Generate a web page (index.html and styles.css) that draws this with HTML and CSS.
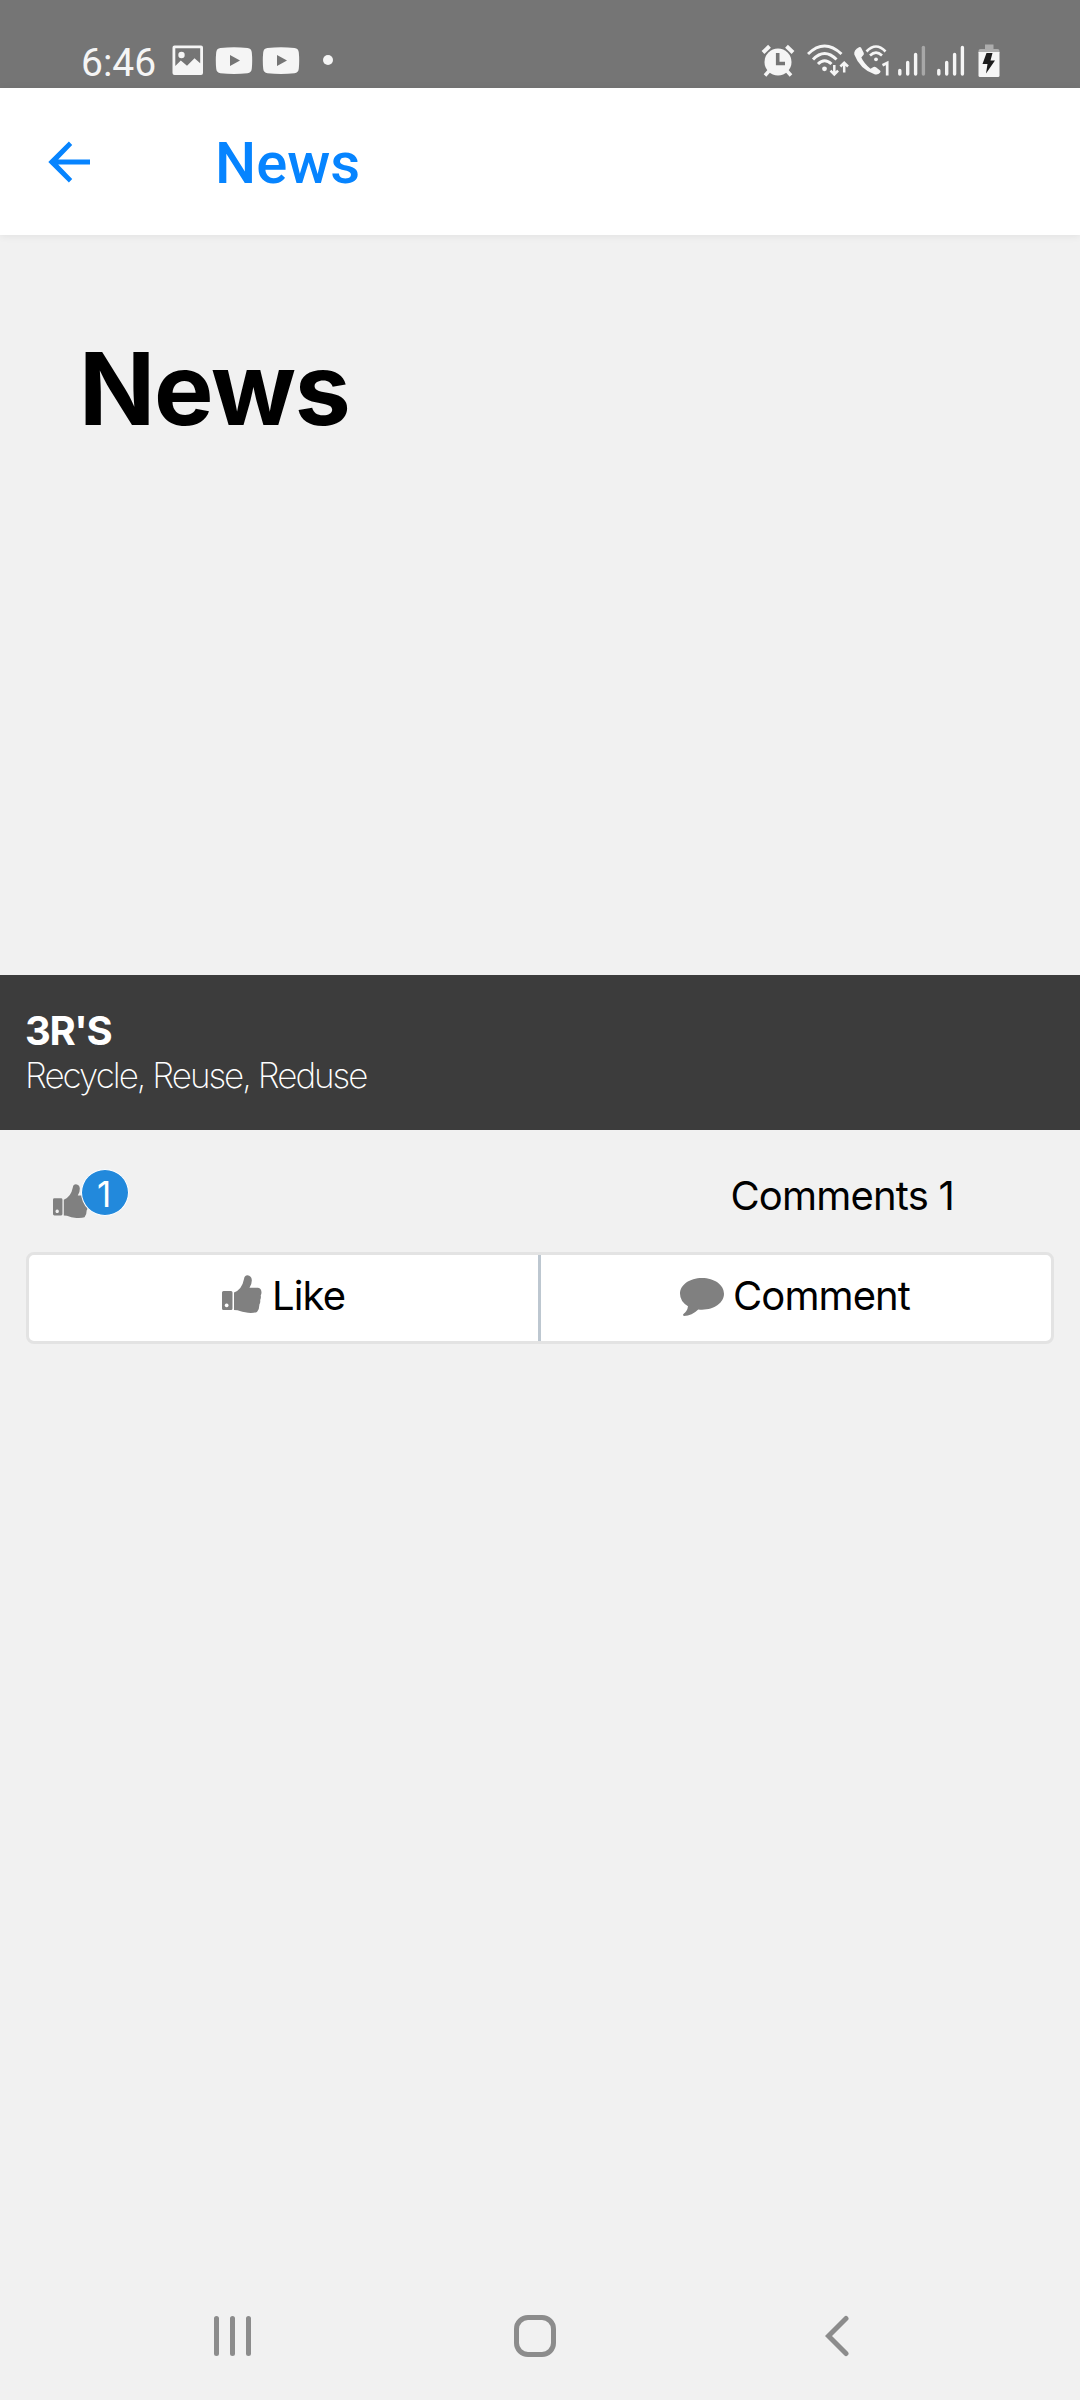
FILE: index.html
```html
<!DOCTYPE html>
<html lang="en">
<head>
<meta charset="utf-8">
<title>News</title>
<link rel="stylesheet" href="styles.css">
</head>
<body>
<div class="status">
  <div class="status-left">
    <span class="clock">6:46</span>
    <svg class="ic-image" width="32" height="32" viewBox="0 0 32 32"><path fill-rule="evenodd" d="M2.500 .5h26.500a2 2 0 0 1 2 2v25.500a2 2 0 0 1-2 2h-26.500a2 2 0 0 1-2-2v-25.500a2 2 0 0 1 2-2zM3.300 3.300v17.700l5.500-5.500 6.200 5.200 7.500-7.500 5.700 5v-14.900z"/><circle cx="9.500" cy="10" r="3.200"/></svg>
    <svg class="ic-video" width="38" height="28" viewBox="0 0 38 28"><path fill-rule="evenodd" d="M5.500 1Q19-.4 32.500 1Q36.500 1.400 36.800 5.500Q37.600 13.500 36.800 21.500Q36.500 25.800 32.500 26.200Q19 27.600 5.500 26.200Q1.500 25.800 1.200 21.500Q.4 13.500 1.200 5.500Q1.500 1.400 5.500 1zM15 8v11l10-5.500z"/></svg>
    <svg class="ic-video" width="38" height="28" viewBox="0 0 38 28"><path fill-rule="evenodd" d="M5.500 1Q19-.4 32.500 1Q36.500 1.400 36.800 5.500Q37.600 13.500 36.800 21.500Q36.500 25.800 32.500 26.200Q19 27.600 5.500 26.200Q1.500 25.800 1.200 21.500Q.4 13.500 1.200 5.500Q1.500 1.400 5.500 1zM15 8v11l10-5.500z"/></svg>
    <span class="more-dot"></span>
  </div>
  <div class="status-right">
    <svg class="ic-alarm" width="34" height="34" viewBox="0 0 34 34"><circle cx="17" cy="18" r="13.500"/><path class="line" stroke-width="4" d="M2 8.500L8.500 2.200M25.500 2.200L32 8.500"/><path class="line" stroke-width="3.500" d="M8 27L4 31.500M26 27L30 31.500"/><path class="cut" stroke-width="3.600" d="M16.700 9v10.500H24"/></svg>
    <svg class="ic-wifi" width="42" height="34" viewBox="0 0 42 34"><g class="line" stroke-width="3"><path d="M1 10Q17.500-6 34.500 10"/><path d="M6 15.500Q17.500 3.500 29.500 15.500"/><path d="M11 20Q17.500 13.500 24.500 20"/></g><circle cx="17.500" cy="24.800" r="2.400"/><path class="line" stroke-width="2.500" d="M27.300 21v9M23.500 26.700l3.800 3.800 3.800-3.800M37.200 28.500v-9M33.400 22.500l3.800-3.800 3.800 3.800"/></svg>
    <svg class="ic-call" width="38" height="34" viewBox="0 0 38 34"><path d="M6 3.200Q7.200 2.500 8 3.600L10.800 9Q11.200 10.500 10 11.500L8.300 13.500Q11 19.500 17.500 24.800L20.500 23Q21.800 22.300 23 23.300L27 26.500Q28.200 27.500 27 28.800Q25 31 21.500 30.200Q7 25.500 1.300 10.500Q.5 6 6 3.200z"/><g class="line" stroke-width="2.600"><path d="M13.500 7.500Q23-2.500 32.500 7.500"/><path d="M17 11.500Q23 5.500 29 11.500"/></g><circle cx="23" cy="15.300" r="1.900"/><path class="line" stroke-width="2.700" d="M29.500 21.300L34.200 19V31.500"/></svg>
    <svg class="ic-signal" width="28" height="32" viewBox="0 0 28 32"><g class="bars"><path d="M1.800 25.500v3.500M9.700 17.500v11.500M17.600 9.500v19.500"/><path opacity=".4" d="M25.400 2.500v26.500"/></g></svg>
    <svg class="ic-signal" width="28" height="32" viewBox="0 0 28 32"><path class="bars" d="M1.800 25.500v3.500M9.700 17.500v11.500M17.600 9.500v19.500M25.400 2.500v26.500"/></svg>
    <svg class="ic-battery" width="22" height="34" viewBox="0 0 22 34"><path fill="#adadad" d="M7 .5h8.500v4.500h4a2 2 0 0 1 2 2v2h-21v-2a2 2 0 0 1 2-2h4.500z"/><path d="M.5 8h21v23.500a1.500 1.500 0 0 1-1.500 1.500h-18a1.500 1.500 0 0 1-1.500-1.500z"/><path fill="#1c1c1c" d="M8.500 9h6l-2 7.500h4.500L8 29.500l1.500-9.500H4.500z"/></svg>
  </div>
</div>
<header class="appbar">
  <svg class="back" width="42" height="42" viewBox="0 0 42 42"><path d="M42 18.400H10.200L24.200 4 20.900.6.300 21l20.600 20.400 3.300-3.400L10.200 23.600H42z"/></svg>
  <h2 class="appbar-title">News</h2>
</header>
<main class="content">
  <h1 class="heading">News</h1>
  <section class="banner">
    <div class="banner-title">3R'S</div>
    <div class="banner-sub">Recycle, Reuse, Reduse</div>
  </section>
  <div class="counts">
    <div class="likes">
      <svg class="thumb" width="36" height="36" viewBox="0 0 40 38"><path fill-rule="evenodd" d="M1.500 16h7.500a1.500 1.500 0 0 1 1.500 1.500V33.500a1.500 1.500 0 0 1-1.500 1.500h-7.500a1.500 1.500 0 0 1-1.500-1.500v-16a1.500 1.500 0 0 1 1.500-1.500zM4.600 28.500a1.900 1.900 0 1 0 .1 0zM12 17.500Q20 14.500 22 4Q22.500 .3 25.500 .3Q29.500 .8 29.800 5Q30 9 27.500 12.800H36Q39.500 13.500 39.500 17.500Q39.500 19 38.700 20.500Q39.300 22.500 38.200 25Q38.600 27.500 37.400 29.500Q37.500 34 35 37Q32 38.200 26 37.800Q20 37.200 15.500 35.300L12 35z"/></svg>
      <span class="badge">1</span>
    </div>
    <span class="comments">Comments 1</span>
  </div>
  <div class="actions">
    <div class="action action-like">
      <svg class="thumb" width="40" height="38" viewBox="0 0 40 38"><path fill-rule="evenodd" d="M1.500 16h7.500a1.500 1.500 0 0 1 1.500 1.500V33.500a1.500 1.500 0 0 1-1.500 1.500h-7.500a1.500 1.500 0 0 1-1.500-1.500v-16a1.500 1.500 0 0 1 1.500-1.500zM4.600 28.500a1.900 1.900 0 1 0 .1 0zM12 17.500Q20 14.500 22 4Q22.500 .3 25.500 .3Q29.500 .8 29.800 5Q30 9 27.500 12.800H36Q39.500 13.500 39.500 17.500Q39.500 19 38.700 20.500Q39.300 22.500 38.200 25Q38.600 27.500 37.400 29.500Q37.500 34 35 37Q32 38.200 26 37.800Q20 37.200 15.500 35.300L12 35z"/></svg>
      <span class="label">Like</span>
    </div>
    <div class="action action-comment">
      <svg class="bubble" width="44" height="38" viewBox="0 0 44 38"><path d="M22 0C34.500 0 44 7 44 15.800S34.500 31.700 22 31.700Q20 31.700 18.300 31.500Q12 37.500 4 38Q2.500 37.500 3.200 36.300Q7.500 33 8 28.300Q0 23.500 0 15.800C0 7 9.500 0 22 0z"/></svg>
      <span class="label">Comment</span>
    </div>
  </div>
</main>
<nav class="nav">
  <svg width="40" height="42" viewBox="0 0 40 42"><path d="M3.500 3.500v35M19.500 3.500v35M35.500 3.500v35"/></svg>
  <svg width="42" height="42" viewBox="0 0 42 42"><rect x="2.500" y="2.500" width="37" height="37" rx="11.500"/></svg>
  <svg width="24" height="42" viewBox="0 0 24 42"><path d="M21 3.500L3.500 21 21 38.500"/></svg>
</nav>
</body>
</html>
```
FILE: styles.css
```css
* { box-sizing: border-box; }
body {
  margin: 0;
  width: 1080px;
  height: 2400px;
  display: flex;
  flex-direction: column;
  overflow: hidden;
  background: #f1f1f1;
  color: #000;
  font-family: Inter, "Liberation Sans", sans-serif;
}
svg { display: block; flex: none; }
h1, h2 { margin: 0; }

.status {
  height: 88px;
  flex: none;
  display: flex;
  justify-content: space-between;
  background: #757575;
  padding: 44px 80px 0 81px;
  color: #f5f5f5;
  fill: #f5f5f5;
}
.status-left, .status-right { display: flex; align-items: flex-start; }
.clock { font: 400 39px/44px Roboto, sans-serif; width: 91px; margin-top: -3px; }
.ic-image { margin: 1px 11px 0 0; }
.ic-video { margin: 3px 9px 0 0; }
.more-dot { width: 10px; height: 10px; border-radius: 50%; background: #f5f5f5; margin: 11px 0 0 14px; }
.line { fill: none; stroke: #f5f5f5; }
.cut { fill: none; stroke: #757575; }
.bars { fill: none; stroke: #f5f5f5; stroke-width: 3.4; stroke-linecap: round; }
.ic-alarm { margin-right: 12px; }
.ic-wifi { margin-right: 4px; }
.ic-call { margin-right: 7px; }
.ic-signal { margin: 1px 11px 0 0; }
.ic-battery { margin: 0 0 0 2px; }

.appbar {
  height: 147px;
  flex: none;
  display: flex;
  align-items: flex-start;
  padding: 53px 0 0 47.5px;
  background: #fff;
  box-shadow: 0 1px 8px rgba(0, 0, 0, .07);
}
.back { fill: #0684ff; }
.appbar-title {
  margin: -12px 0 0 125.5px;
  color: #0684ff;
  font: 500 58px/68px Roboto, sans-serif;
}

.content { flex: 1; display: flex; flex-direction: column; }
.heading {
  height: 740px;
  padding: 93px 0 0 79px;
  font-size: 100px;
  line-height: 121px;
  font-weight: 700;
  letter-spacing: -1.2px;
}
.banner {
  height: 155px;
  padding: 32px 25px 0;
  background: #3c3c3c;
  color: #fff;
}
.banner-title { font-size: 40px; line-height: 48px; font-weight: 700; letter-spacing: -1.4px; }
.banner-sub { margin-top: -1px; font-size: 35px; line-height: 42px; font-weight: 200; letter-spacing: -2px; }
.counts {
  height: 122px;
  display: flex;
  justify-content: space-between;
  padding: 40px 126px 0 53px;
  font-size: 40px;
}
.likes { display: flex; position: relative; padding-top: 13px; }
.thumb, .bubble { fill: #808080; }
.badge {
  position: absolute;
  left: 28px;
  top: -1px;
  width: 48px;
  height: 47px;
  padding-right: 2px;
  border: 1px solid #fff;
  border-radius: 50%;
  background: #2289dc;
  color: #fff;
  font-size: 35px;
  line-height: 48px;
  text-align: center;
}
.comments { line-height: 52px; letter-spacing: -.8px; }
.actions {
  height: 92px;
  margin: 0 26px;
  display: flex;
  background: #fff;
  border: 3px solid #e3e3e3;
  border-radius: 8px;
  font-size: 40px;
  line-height: 50px;
}
.action { display: flex; align-items: flex-start; padding-top: 16px; }
.label { letter-spacing: -.9px; }
.action-like { width: 512px; padding-left: 193px; border-right: 3px solid #bdc7d0; gap: 10px; }
.action-like .thumb { margin-top: 4px; }
.action-comment { padding-left: 139px; gap: 9px; }
.action-comment .bubble { margin-top: 7px; }

.nav {
  height: 130px;
  flex: none;
  display: flex;
  gap: 261px;
  padding: 45px 0 0 213px;
}
.nav svg { fill: none; stroke: #8c8c8c; stroke-width: 5; stroke-linecap: round; }
.nav svg:last-child { margin-left: 8px; }
```
